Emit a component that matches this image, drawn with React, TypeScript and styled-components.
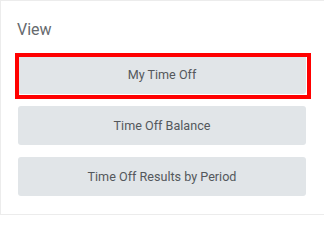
import React from "react";
import styled, { createGlobalStyle } from "styled-components";

const Global = createGlobalStyle`
  html, body { margin: 0; padding: 0; background: #ffffff; }
  body { font-family: Roboto, "Liberation Sans", Arial, sans-serif; }
`;

const Card = styled.section`
  box-sizing: border-box;
  width: 340px;
  height: 215px;
  border: 1px solid #ececec;
  border-right: none;
  background: #ffffff;
  padding: 19px 0 0 16px;
  display: flex;
  flex-direction: column;
`;

const Title = styled.h2`
  margin: 0;
  font-size: 16px;
  line-height: 19px;
  font-weight: 400;
  color: #666a6e;
`;

const List = styled.div`
  margin-top: 16px;
  padding-left: 1px;
  display: flex;
  flex-direction: column;
  gap: 12px;
  width: 288px;
`;

const Button = styled.button<{ $highlight?: boolean }>`
  position: relative;
  box-sizing: border-box;
  height: 39px;
  width: 288px;
  border: none;
  border-radius: 3px;
  background: #e1e5e8;
  color: #54585c;
  font-family: Roboto, "Liberation Sans", Arial, sans-serif;
  font-size: 12.6px;
  padding: 0;
  display: flex;
  align-items: center;
  justify-content: center;
  cursor: pointer;
`;

const Highlight = styled.span`
  position: absolute;
  left: -3px;
  top: -2px;
  right: -5px;
  bottom: -5px;
  border: 4px solid #ff0000;
  pointer-events: none;
`;

const items = ["My Time Off", "Time Off Balance", "Time Off Results by Period"];

export default function App() {
  return (
    <>
      <Global />
      <Card>
        <Title>View</Title>
        <List>
          {items.map((label, i) => (
            <Button key={label} $highlight={i === 0}>
              {label}
              {i === 0 && <Highlight />}
            </Button>
          ))}
        </List>
      </Card>
    </>
  );
}
